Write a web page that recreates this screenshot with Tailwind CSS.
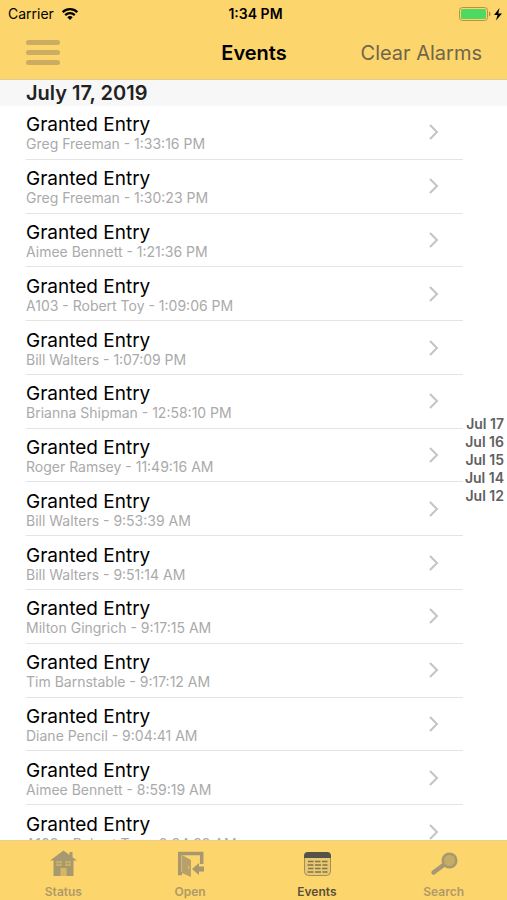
<!DOCTYPE html>
<html lang="en">
<head>
<meta charset="utf-8">
<meta name="viewport" content="width=device-width, initial-scale=1">
<title>Events</title>
<script src="https://cdn.jsdelivr.net/npm/@tailwindcss/browser@4"></script>
</head>
<body class="relative flex h-screen flex-col overflow-hidden bg-white font-['Inter','Liberation_Sans',sans-serif] text-black">
  <header class="shrink-0 border-b border-[#e3cc8f] bg-[#fdd56d]">
    <div class="grid h-7 grid-cols-3 items-center pl-2 pr-1 text-sm">
      <div class="flex items-center gap-2">
        <span>Carrier</span>
        <svg class="h-3 w-4" viewBox="0 0 16 12" fill="none" stroke="#000" stroke-width="2.200" aria-label="Wi-Fi"><path d="M.7 4.200a10.400 10.400 0 0 1 14.600 0M3.200 7.100a6.800 6.800 0 0 1 9.600 0"/><path d="M8 12 5.300 9.200a3.900 3.900 0 0 1 5.400 0z" fill="#000" stroke="none"/></svg>
      </div>
      <span class="text-center font-semibold">1:34 PM</span>
      <svg class="h-4 w-11 justify-self-end" viewBox="0 0 44 16" aria-label="Battery charging"><rect x=".5" y="1.500" width="28" height="13" rx="3" fill="none" stroke="#b5933f"/><rect x="2" y="3" width="25" height="10" rx="1.500" fill="#4cd964"/><path d="M30 5.600c2 .7 2 4.100 0 4.800z" fill="#a98a40"/><path d="M40.500 2 35 9h3.500l-1.500 5.500L43 7.400h-3.700z" fill="#000"/></svg>
    </div>
    <div class="grid h-[51px] grid-cols-3 items-center pl-[26px] pr-[25px] pb-[2px]">
      <button type="button" aria-label="Menu" class="flex w-[34px] flex-col gap-[5px]">
        <span class="h-[5px] w-full rounded-full bg-[#cbac60]"></span>
        <span class="h-[5px] w-full rounded-full bg-[#cbac60]"></span>
        <span class="h-[5px] w-full rounded-full bg-[#cbac60]"></span>
      </button>
      <h1 class="text-center text-xl font-semibold">Events</h1>
      <button type="button" class="justify-self-end whitespace-nowrap text-xl text-[#71654a]">Clear Alarms</button>
    </div>
  </header>

  <main class="min-h-0 flex-1 overflow-hidden">
    <h2 class="bg-[#f7f7f7] pl-[26px] text-xl leading-[26px] font-semibold text-[#222]">July 17, 2019</h2>
    <ul id="events" class="ml-[26px] mr-11 grid min-h-[753px] auto-rows-fr"></ul>
  </main>

  <nav aria-label="Dates" class="absolute right-[3px] top-[415px] flex flex-col text-right text-sm leading-[18px] font-semibold text-[#606060]">
    <a href="#jul17">Jul 17</a>
    <a href="#jul16">Jul 16</a>
    <a href="#jul15">Jul 15</a>
    <a href="#jul14">Jul 14</a>
    <a href="#jul12">Jul 12</a>
  </nav>

  <nav aria-label="Main" class="grid h-[60px] shrink-0 grid-cols-4 border-t border-[#ecd08a] bg-[#fdd56d] text-xs font-semibold text-[#b09a67]">
    <a href="#status" class="flex flex-col items-center gap-[3px] pt-2">
      <svg class="h-8 w-8" viewBox="0 0 32 32"><path fill="#a8986f" d="M16.500 1.500 3 11.500H6.500V27h20V11.500H30L25.500 8.200V3h-3v3z"/><path fill="#d3b765" d="M9.500 12h5v5h-5zM18.500 12h5v5h-5zM13.500 19h6v8h-6z"/><path stroke="#a8986f" d="M12 12v5M9.500 14.500h5M21 12v5M18.500 14.500h5" stroke-width=".8"/></svg>
      <span>Status</span>
    </a>
    <a href="#open" class="flex flex-col items-center gap-[3px] pt-2">
      <svg class="h-8 w-8" viewBox="0 0 32 32"><path fill="none" stroke="#a8986f" stroke-width="3.500" d="M8 24.500H5.700V4.500h22V15"/><path fill="#b7a069" d="m8 6 9 5v17l-9-4z"/><path fill="#a8986f" d="m18 20 7-6v3.500h5v5h-5V26z"/><path fill="#d8ba66" d="M14 17h1.500v3H14z"/></svg>
      <span>Open</span>
    </a>
    <a href="#events" aria-current="page" class="flex flex-col items-center gap-[3px] pt-2 text-[#5b5138]">
      <svg class="h-8 w-8" viewBox="0 0 32 32"><rect x="3.500" y="3.500" width="26" height="23" rx="4" fill="#e7c973" stroke="#a58d52"/><path fill="#555249" d="M3 9V7a4 4 0 0 1 4-4h19a4 4 0 0 1 4 4v2z"/><path stroke="#85744b" stroke-width="1.500" stroke-dasharray="5.500 1.500" d="M7 12.500h20M7 19.500h20"/><path stroke="#85744b" stroke-width="1.500" stroke-dasharray="6 1.500" d="M6.500 16h20M6.500 23h20"/></svg>
      <span>Events</span>
    </a>
    <a href="#search" class="flex flex-col items-center gap-[3px] pt-2">
      <svg class="h-8 w-8" viewBox="0 0 32 32"><path stroke="#a8986f" stroke-width="4.500" stroke-linecap="round" d="m5.500 23.500 10-7.500"/><circle cx="21.500" cy="11.500" r="6.800" fill="#c4ac68" stroke="#a8986f" stroke-width="2.500"/></svg>
      <span>Search</span>
    </a>
  </nav>

  <script>
    const events = [
      "Greg Freeman - 1:33:16 PM",
      "Greg Freeman - 1:30:23 PM",
      "Aimee Bennett - 1:21:36 PM",
      "A103 - Robert Toy - 1:09:06 PM",
      "Bill Walters - 1:07:09 PM",
      "Brianna Shipman - 12:58:10 PM",
      "Roger Ramsey - 11:49:16 AM",
      "Bill Walters - 9:53:39 AM",
      "Bill Walters - 9:51:14 AM",
      "Milton Gingrich - 9:17:15 AM",
      "Tim Barnstable - 9:17:12 AM",
      "Diane Pencil - 9:04:41 AM",
      "Aimee Bennett - 8:59:19 AM",
      "A103 - Robert Toy - 8:34:22 AM"
    ];
    document.getElementById("events").innerHTML = events.map(detail => `
      <li class="border-b border-[#e4e4e4]">
        <a href="#event" class="flex h-full items-center justify-between pr-6">
          <span class="flex flex-col pt-[2px]">
            <span class="text-[19px] leading-[22px]">Granted Entry</span>
            <span class="text-sm leading-4 text-[#aaa]">${detail}</span>
          </span>
          <svg class="h-4 w-[10px]" viewBox="0 0 10 16" fill="none" stroke="#c4c4c6" stroke-width="2"><path d="m1 1 7 7-7 7"/></svg>
        </a>
      </li>`).join("");
  </script>
</body>
</html>
